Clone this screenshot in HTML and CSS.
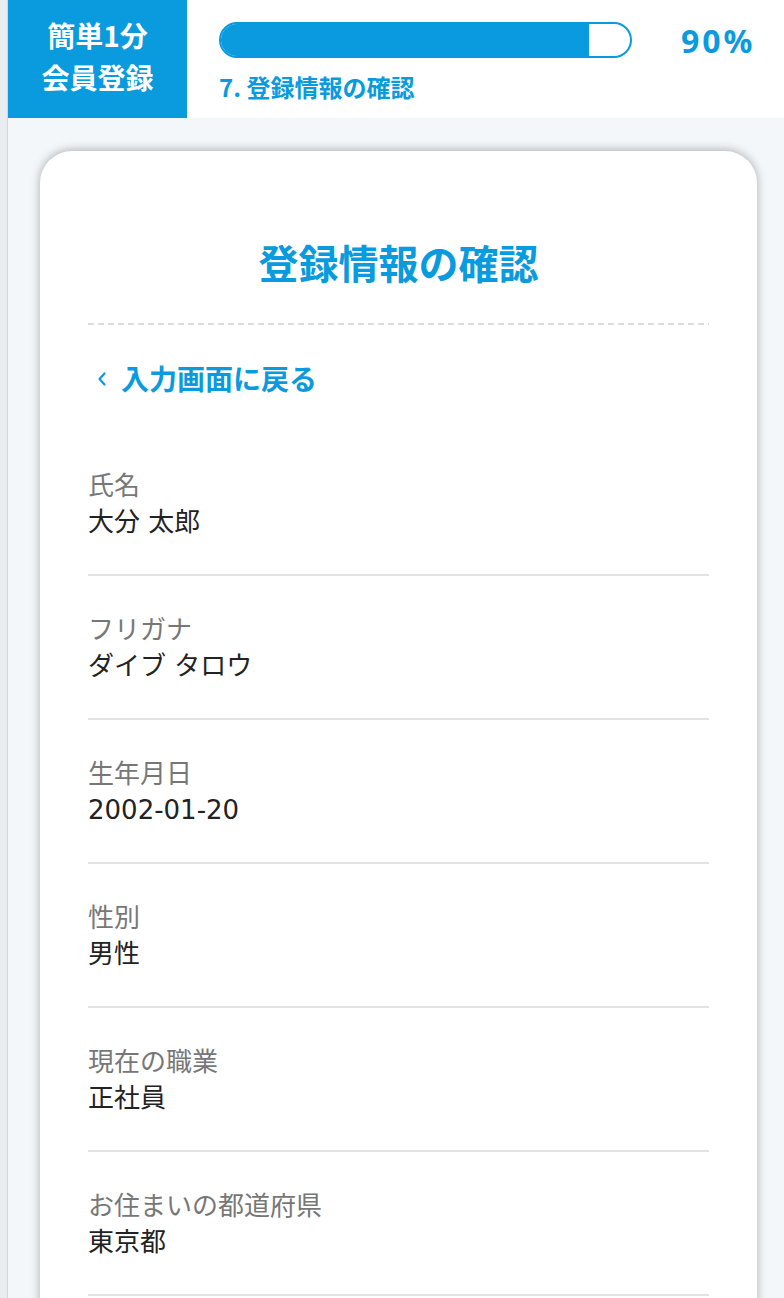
FILE: index.html
```html
<!DOCTYPE html>
<html lang="ja">
<head>
<meta charset="utf-8">
<title>登録情報の確認</title>
<link rel="stylesheet" href="styles.css">
</head>
<body>
<div class="frame">
  <div class="rail"></div>
  <div class="page">
    <header class="header">
      <div class="brand">
        <span>簡単1分</span>
        <span>会員登録</span>
      </div>
      <div class="progress">
        <div class="progress-top">
          <div class="bar"><div class="bar-fill" style="width: 90%"></div></div>
          <div class="percent">90%</div>
        </div>
        <div class="step">7. 登録情報の確認</div>
      </div>
    </header>
    <main class="card">
      <h1 class="title">登録情報の確認</h1>
      <div class="dash"></div>
      <a class="back" href="#">
        <svg class="chev" width="10" height="16" viewBox="0 0 10 16"><polyline points="7.5,2.5 2.5,8 7.5,13.5" fill="none" stroke="currentColor" stroke-width="2.2" stroke-linecap="round" stroke-linejoin="round"/></svg>
        <span>入力画面に戻る</span>
      </a>
      <dl class="rows">
        <div class="row"><dt>氏名</dt><dd>大分 太郎</dd></div>
        <div class="row"><dt>フリガナ</dt><dd>ダイブ タロウ</dd></div>
        <div class="row"><dt>生年月日</dt><dd>2002-01-20</dd></div>
        <div class="row"><dt>性別</dt><dd>男性</dd></div>
        <div class="row"><dt>現在の職業</dt><dd>正社員</dd></div>
        <div class="row"><dt>お住まいの都道府県</dt><dd>東京都</dd></div>
      </dl>
    </main>
  </div>
</div>
</body>
</html>
```

FILE: styles.css
```css
* { box-sizing: border-box; }
html, body { margin: 0; padding: 0; }
body {
  font-family: "Noto Sans CJK JP", "Noto Sans", sans-serif;
  background: #f3f7fa;
  overflow: hidden;
}
.frame {
  display: flex;
  min-height: 1298px;
}
.rail {
  width: 8px;
  flex: none;
  background: #e9edf0;
  border-right: 1px solid #d2d7db;
}
.page {
  flex: 1;
  min-width: 0;
}
.header {
  display: flex;
  height: 118px;
  background: #ffffff;
}
.brand {
  width: 179px;
  flex: none;
  background: #0a9ade;
  color: #ffffff;
  font-weight: 700;
  font-size: 28px;
  line-height: 42px;
  display: flex;
  flex-direction: column;
  align-items: center;
  padding-top: 14px;
}
.progress {
  padding: 21px 0 0 32px;
}
.progress-top {
  display: flex;
  align-items: center;
}
.bar {
  width: 413px;
  height: 36px;
  border: 2px solid #0a9ade;
  border-radius: 18px;
  overflow: hidden;
  background: #ffffff;
}
.bar-fill {
  height: 100%;
  background: #0a9ade;
}
.percent {
  margin-left: 49px;
  font-family: "Noto Sans", sans-serif;
  font-weight: 700;
  font-size: 32px;
  letter-spacing: 3px;
  color: #0a9ade;
  line-height: 36px;
  margin-top: 2px;
}
.step {
  margin-top: 10px;
  font-weight: 700;
  font-size: 24px;
  line-height: 36px;
  color: #0a9ade;
}
.card {
  margin: 33px 27px 0 32px;
  background: #ffffff;
  border-radius: 32px 32px 0 0;
  box-shadow: 0 -1px 10px rgba(0, 0, 0, 0.3);
  padding: 83px 48px 0 48px;
  min-height: 1200px;
}
.title {
  margin: 0;
  text-align: center;
  font-size: 40px;
  line-height: 56px;
  font-weight: 700;
  color: #0a9ade;
}
.dash {
  margin-top: 33px;
  height: 2px;
  background: repeating-linear-gradient(to right, #dcdcdc 0 6px, transparent 6px 10px);
}
.back {
  display: flex;
  align-items: center;
  margin-top: 33px;
  padding-left: 9px;
  font-size: 28px;
  font-weight: 700;
  line-height: 40px;
  color: #0a9ade;
  text-decoration: none;
}
.chev {
  margin-right: 14px;
  margin-top: 2px;
}
.rows {
  margin: 34px 0 0 0;
}
.row {
  padding: 32px 0;
  border-bottom: 2px solid #e3e3e3;
}
.row dt {
  margin: 0;
  font-size: 26px;
  line-height: 39px;
  color: #777777;
}
.row dd {
  margin: 0;
  font-family: "DejaVu Sans", "Noto Sans CJK JP", sans-serif;
  font-size: 26px;
  line-height: 39px;
  color: #222222;
}
```
